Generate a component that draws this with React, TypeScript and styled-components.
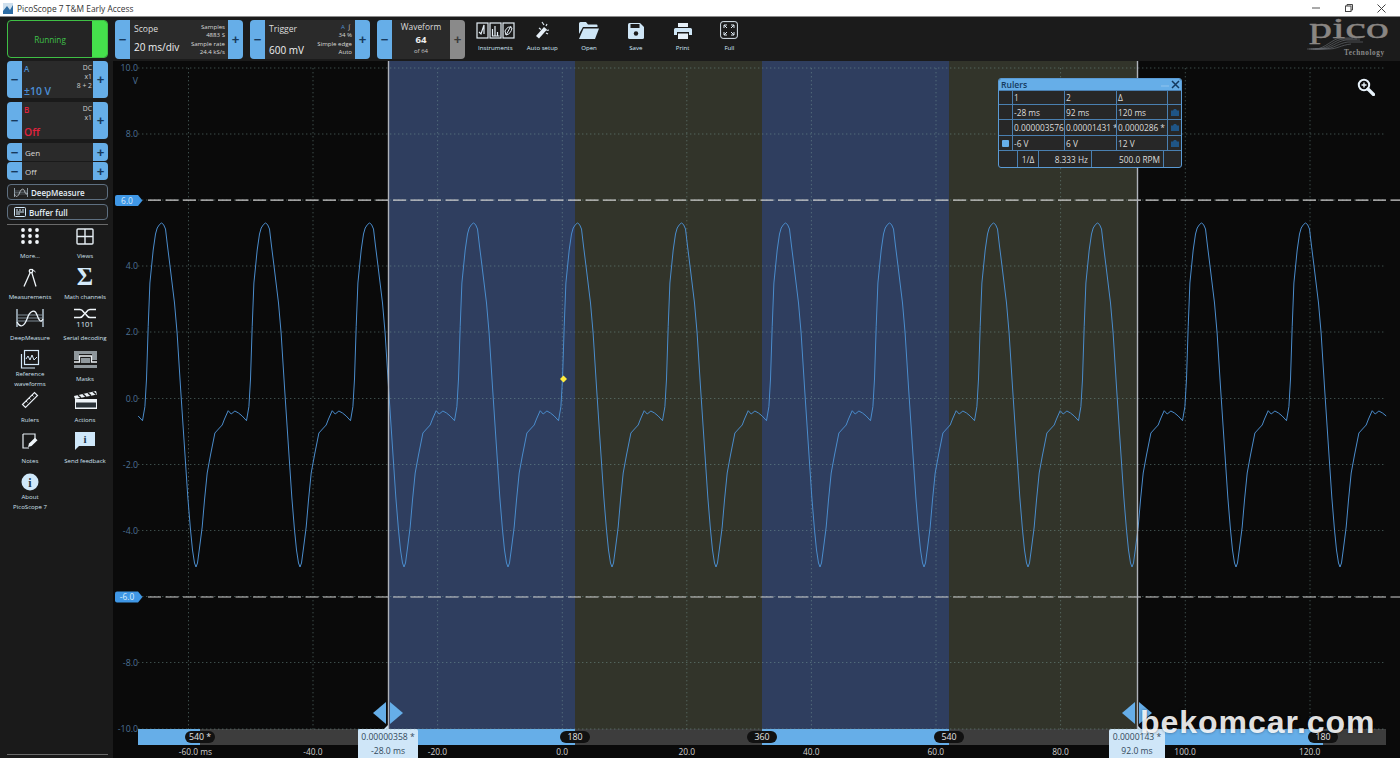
import React from "react";
import styled, { createGlobalStyle } from "styled-components";

const GlobalStyle = createGlobalStyle`
  html, body { margin: 0; padding: 0; background: #1a1a1a; }
  body { font-family: "Open Sans", "Liberation Sans", sans-serif; overflow: hidden; }
`;

const BLUE = "#66aee8";
const ICON = "#d4eafa";

const Shell = styled.div`
  width: 1400px;
  height: 758px;
  display: flex;
  flex-direction: column;
  overflow: hidden;
  background: #1a1a1a;
`;

/* title bar */
const TitleBar = styled.div`
  height: 16px;
  flex: none;
  background: #fff;
  border-bottom: 1px solid #8c8c8c;
  display: flex;
  align-items: center;
  padding-left: 3px;
  font-size: 8.4px;
  color: #333;
`;
const TitleText = styled.span`
  margin-left: 4px;
`;
const WinButtons = styled.div`
  margin-left: auto;
  display: flex;
  padding-right: 2px;
`;
const WinButton = styled.div`
  width: 33px;
  height: 16px;
  display: flex;
  align-items: center;
  justify-content: center;
`;

/* top toolbar */
const Toolbar = styled.div`
  height: 44px;
  flex: none;
  display: flex;
  align-items: center;
  padding-left: 7px;
  gap: 7px;
  background: #1b1b1b;
`;
const RunPanel = styled.div`
  width: 101px;
  height: 38px;
  box-sizing: border-box;
  border: 1px solid #3fbf45;
  border-radius: 4px;
  background: #242424;
  display: flex;
  overflow: hidden;
`;
const RunLabel = styled.div`
  flex: 1;
  display: flex;
  align-items: center;
  justify-content: center;
  color: #3fc04a;
  font-size: 8.2px;
  font-weight: 500;
`;
const RunLamp = styled.div`
  width: 15px;
  background: #45e04c;
`;
const Stepper = styled.div<{ $w: number; $h?: number }>`
  width: ${(p) => p.$w}px;
  height: ${(p) => p.$h ?? 39}px;
  display: flex;
  flex: none;
  border-radius: 4px;
  overflow: hidden;
  background: #2a2a2a;
`;
const StepBtn = styled.div<{ $off?: boolean }>`
  width: 15px;
  flex: none;
  background: ${(p) => (p.$off ? "#8a8a8a" : BLUE)};
  color: ${(p) => (p.$off ? "#3a3a3a" : "#16395c")};
  display: flex;
  align-items: center;
  justify-content: center;
  font-family: "Liberation Sans", sans-serif;
  font-size: 13px;
  font-weight: 700;
  line-height: 1;
`;
const StepBody = styled.div`
  flex: 1;
  min-width: 0;
  display: flex;
  justify-content: space-between;
  padding: 3px 3px 2px 4px;
  color: #e8e8e8;
`;
const StepMain = styled.div`
  display: flex;
  flex-direction: column;
  justify-content: space-between;
  white-space: nowrap;
`;
const StepTitle = styled.div`
  font-size: 8.6px;
  line-height: 12px;
  color: #dcdcdc;
`;
const StepValue = styled.div<{ $low?: boolean }>`
  font-size: 10px;
  font-weight: 500;
  line-height: 14px;
  padding-bottom: ${(p) => (p.$low ? "0" : "3px")};
  color: #f0f0f0;
`;
const StepInfo = styled.div`
  display: flex;
  flex-direction: column;
  justify-content: center;
  text-align: right;
  font-size: 6.1px;
  line-height: 8.4px;
  color: #d8d8d8;
  white-space: nowrap;
`;
const InfoChannel = styled.span`
  color: #4f8fd0;
`;
const StepCenter = styled.div`
  flex: 1;
  display: flex;
  flex-direction: column;
  align-items: center;
  justify-content: center;
  color: #dcdcdc;
  font-size: 8.4px;
  line-height: 12px;
`;
const CenterBig = styled.div`
  font-size: 9.6px;
  font-weight: 700;
  line-height: 13px;
  color: #eee;
`;
const CenterSmall = styled.div`
  font-size: 6px;
  line-height: 11px;
  color: #c8c8c8;
`;
const Tools = styled.div`
  display: flex;
`;
const TopTool = styled.div`
  width: 46.8px;
  height: 44px;
  display: flex;
  flex-direction: column;
  align-items: center;
  justify-content: flex-end;
  padding-bottom: 9px;
  box-sizing: border-box;
  gap: 5px;
  color: ${ICON};
  font-size: 6.1px;
  line-height: 8px;
  white-space: nowrap;
`;
const Logo = styled.div`
  margin-left: auto;
  padding-right: 5px;
  display: flex;
`;
const LogoSvg = styled.svg`
  overflow: visible;
`;

/* body */
const Body = styled.div`
  flex: 1;
  min-height: 0;
  display: flex;
`;
const Sidebar = styled.div`
  width: 113px;
  flex: none;
  box-sizing: border-box;
  padding-left: 7px;
  padding-right: 5px;
  display: flex;
  flex-direction: column;
  background: #1a1a1a;
`;
const Channel = styled.div`
  margin-bottom: 4px;
`;
const ChannelBody = styled.div`
  flex: 1;
  min-width: 0;
  display: flex;
  justify-content: space-between;
  padding: 2px 1px 0 2px;
`;
const ChannelMain = styled.div<{ $color: string }>`
  display: flex;
  flex-direction: column;
  justify-content: space-between;
  color: ${(p) => p.$color};
  font-weight: 600;
`;
const ChannelName = styled.div`
  font-size: 8px;
  line-height: 11px;
`;
const ChannelRange = styled.div`
  font-size: 10.4px;
  line-height: 14px;
`;
const ChannelInfo = styled.div`
  text-align: right;
  font-size: 6.8px;
  line-height: 9px;
  color: #d0d0d0;
`;
const GenRows = styled.div`
  display: flex;
  flex-direction: column;
  gap: 1px;
  margin-bottom: 4px;
`;
const GenText = styled.div`
  flex: 1;
  display: flex;
  align-items: center;
  padding-left: 3px;
  font-size: 8px;
  color: #d8d8d8;
`;
const WideBtn = styled.div`
  height: 16px;
  box-sizing: border-box;
  margin-bottom: 4px;
  border: 1px solid #5e6f80;
  border-radius: 4px;
  background: #222;
  display: flex;
  align-items: center;
  padding-left: 6px;
  gap: 3px;
  color: #e4eef6;
  font-size: 8px;
  font-weight: 600;
`;
const Divider = styled.div`
  height: 1px;
  background: #6a6a6a;
`;
const ToolGrid = styled.div`
  display: grid;
  grid-template-columns: 54px 56px;
  grid-auto-rows: 41px;
  margin: 0 0 0 -4px;
`;
const SideTool = styled.div`
  display: flex;
  flex-direction: column;
  align-items: center;
`;
const SideIcon = styled.div`
  height: 22px;
  display: flex;
  align-items: center;
  justify-content: center;
  color: ${ICON};
`;
const SideLabel = styled.div`
  height: 17px;
  display: flex;
  align-items: center;
  text-align: center;
  color: #cfe0ee;
  font-size: 6.1px;
  line-height: 9.5px;
  white-space: pre;
`;
const Sigma = styled.span`
  font-family: "Liberation Serif", serif;
  font-weight: 700;
  font-size: 25px;
  line-height: 22px;
  color: ${ICON};
`;
const SideFoot = styled.div`
  margin-top: auto;
  margin-bottom: 3px;
  height: 1px;
  background: #6a6a6a;
`;

/* plot */
const Plot = styled.div`
  flex: 1;
  display: flex;
  flex-direction: column;
  background: #0a0a0a;
  position: relative;
`;
const Chart = styled.div`
  height: 668px;
  flex: none;
  position: relative;
  z-index: 1;
`;
const ChartSvg = styled.svg`
  display: block;
  overflow: visible;
`;
const RulerWindow = styled.div`
  position: absolute;
  left: 885px;
  top: 17px;
  width: 184px;
  box-sizing: border-box;
  border: 1px solid #5a9ad4;
  border-radius: 3px;
  background: #272727;
  overflow: hidden;
  color: #dcdcdc;
  font-size: 8.3px;
`;
const WinHead = styled.div`
  height: 11px;
  background: ${BLUE};
  display: flex;
  align-items: center;
  padding: 0 1px 0 2px;
  color: #143a60;
  font-size: 8.6px;
  font-weight: 600;
`;
const WinHeadIcons = styled.div`
  margin-left: auto;
  display: flex;
  align-items: center;
  gap: 2px;
`;
const Row = styled.div<{ $h: number }>`
  display: grid;
  grid-template-columns: 14px 52px 52px 51px 1fr;
  height: ${(p) => p.$h}px;
  border-top: 1px solid #4a7fb0;
  box-sizing: border-box;
`;
const Cell = styled.div`
  border-right: 1px solid #4a7fb0;
  padding-left: 1px;
  display: flex;
  align-items: center;
  overflow: hidden;
  white-space: nowrap;
  &:last-child { border-right: 0; padding-left: 0; justify-content: center; }
`;
const Square = styled.div`
  width: 7px;
  height: 7px;
  margin-left: 2px;
  background: ${BLUE};
  border-radius: 1px;
`;
const FootRow = styled.div`
  display: grid;
  grid-template-columns: 21px 53px 73px;
  height: 17px;
  box-sizing: border-box;
  border-top: 1px solid #4a7fb0;
  padding-left: 18px;
`;
const FootCell = styled.div<{ $right?: boolean }>`
  border-left: 1px solid #4a7fb0;
  border-right: ${(p) => (p.$right ? "1px solid #4a7fb0" : "0")};
  display: flex;
  align-items: center;
  justify-content: ${(p) => (p.$right ? "flex-end" : "center")};
  padding-right: ${(p) => (p.$right ? "3px" : "0")};
  white-space: nowrap;
  &:nth-child(2) { justify-content: flex-end; padding-right: 3px; }
`;
const ZoomGlass = styled.div`
  position: absolute;
  left: 1244px;
  top: 17px;
`;

/* time axis */
const Axis = styled.div`
  flex: 1;
  position: relative;
`;
const Track = styled.div`
  display: flex;
  position: relative;
  height: 16px;
  width: 1248px;
  margin-left: 25px;
`;
const Segment = styled.div<{ $w: number; $on: boolean }>`
  width: ${(p) => p.$w}px;
  background: ${(p) => (p.$on ? BLUE : "#3d3d3d")};
`;
const Pill = styled.div<{ $x: number }>`
  position: absolute;
  left: ${(p) => p.$x - 138}px;
  top: 2px;
  transform: translateX(-50%);
  width: 30px;
  height: 12px;
  border-radius: 6px;
  background: #111;
  color: #e4e4e4;
  font-size: 8.8px;
  line-height: 12px;
  text-align: center;
`;
const Ticks = styled.div`
  display: flex;
  padding-left: 13px;
  color: #d0d0d0;
  font-size: 8.4px;
  line-height: 13px;
`;
const Tick = styled.div<{ $unit?: boolean }>`
  width: 124.6px;
  flex: none;
  text-align: center;
  padding-left: ${(p) => (p.$unit ? "14px" : "0")};
  box-sizing: border-box;
`;
const Callout = styled.div<{ $x: number; $w: number }>`
  position: absolute;
  left: ${(p) => p.$x - 113}px;
  top: 0;
  width: ${(p) => p.$w}px;
  height: 29px;
  background: #cfe6f8;
  border-radius: 2px 2px 0 0;
  color: #33495a;
  font-size: 8.6px;
  display: flex;
  flex-direction: column;
  align-items: center;
  justify-content: space-between;
  padding: 2px 0 1px;
  box-sizing: border-box;
  white-space: nowrap;
  &::before {
    content: "";
    position: absolute;
    top: -4px;
    left: 50%;
    margin-left: -4px;
    border-left: 4px solid transparent;
    border-right: 4px solid transparent;
    border-bottom: 4px solid #cfe6f8;
  }
`;
const Watermark = styled.div`
  position: absolute;
  left: 1027px;
  top: -24px;
  z-index: 3;
  color: rgba(255, 255, 255, 0.9);
  font-family: "Liberation Sans", sans-serif;
  font-size: 32px;
  font-weight: 700;
  line-height: 34px;
  letter-spacing: 0.95px;
  text-shadow: 0 0 3px rgba(0, 0, 0, 0.45);
  white-space: nowrap;
`;

/* icons */
const MoreIcon = () => (
  <svg width="18" height="16" viewBox="0 0 18 16" fill="#f2f6fa">
    {[2, 9, 16].flatMap((x) =>
      [2, 8, 14].map((y) => <circle key={x + "-" + y} cx={x} cy={y} r="1.9" />)
    )}
  </svg>
);
const ViewsIcon = () => (
  <svg width="18" height="17" viewBox="0 0 18 17" fill="none" stroke="#e6eef4" strokeWidth="1.4">
    <rect x="1" y="1" width="16" height="15" rx="1" />
    <path d="M9 1V16M1 8.5H17" />
  </svg>
);
const CompassIcon = () => (
  <svg width="14" height="19" viewBox="0 0 14 19" fill="none" stroke="#eef4f8" strokeWidth="1.3">
    <circle cx="8" cy="3" r="1.7" />
    <path d="M7.2 4.6L1 18.5M8.8 4.6L13 18.5" />
    <path d="M9 1L12.5 4" strokeWidth="1" />
  </svg>
);
const DeepIcon = ({ w = 28, h = 20 }: { w?: number; h?: number }) => (
  <svg width={w} height={h} viewBox="0 0 28 20" fill="none">
    <path d="M2 7H26M2 10H26M2 13H26" stroke="#7d8a94" strokeWidth="1" />
    <path d="M1 1V19M27 1V19" stroke={ICON} strokeWidth="1.2" />
    <path d="M1 14C4 20 8 19 11 11C14 2 19 1 21 7C23 13 25 15 27 11" stroke="#eef6fc" strokeWidth="1.3" />
  </svg>
);
const SerialIcon = () => (
  <svg width="22" height="20" viewBox="0 0 22 20" fill="none">
    <path d="M0 1.5H6C9 1.5 10 5.5 11 5.5C12 5.5 13 1.5 16 1.5H22M0 9.5H6C9 9.5 10 5.5 11 5.5C12 5.5 13 9.5 16 9.5H22" stroke="#f0f6fa" strokeWidth="1.5" />
    <text x="11" y="19" textAnchor="middle" fontSize="7.6" fill="#dfe9f2" fontFamily="Open Sans, sans-serif">1101</text>
  </svg>
);
const ReferenceIcon = () => (
  <svg width="20" height="20" viewBox="0 0 20 20" fill="none" stroke={ICON} strokeWidth="1.2">
    <path d="M1.5 5V19H15" />
    <rect x="4.5" y="1.5" width="14" height="14" />
    <path d="M6 10L8 7L10 11L12 6L14 11L17 8" strokeWidth="1" />
  </svg>
);
const MasksIcon = () => (
  <svg width="23" height="17" viewBox="0 0 23 17">
    <path d="M0 0H23V9H18V3H5V9H0Z" fill="#8f979c" />
    <path d="M0 14H23V17H0ZM7 7H16V12H7Z" fill="#8f979c" />
    <path d="M0 11H5.5V5H17.5V11H23" stroke="#eef2f5" strokeWidth="1.3" fill="none" />
  </svg>
);
const RulerIcon = () => (
  <svg width="18" height="18" viewBox="0 0 18 18" fill="none" stroke="#e8eef4" strokeWidth="1.2">
    <path d="M1.5 13.5L13.5 1.5L16.5 4.5L4.5 16.5Z" />
    <path d="M5 10L6.5 11.5M8 7L9.5 8.5M11 4L12.5 5.5" strokeWidth="0.9" />
  </svg>
);
const ClapIcon = () => (
  <svg width="23" height="18" viewBox="0 0 23 18">
    <path d="M0 5L22 0L23 3.5L1 8Z" fill="#eef4f8" />
    <path d="M4 4.2L7 6.8M9 3L12 5.8M14 2L17 4.6M19 .8L22 3.4" stroke="#222" strokeWidth="1.4" />
    <rect x="1" y="8" width="22" height="10" fill="#eef4f8" />
    <rect x="2" y="11.5" width="20" height="5" fill="#2a3238" />
  </svg>
);
const NoteIcon = () => (
  <svg width="16" height="16" viewBox="0 0 16 16" fill="none">
    <path d="M1 1H13V7M7 15H1V1" stroke="#e6eef4" strokeWidth="1.2" />
    <path d="M6 14L7 10.5L13 4.8L15.5 7.2L9.5 13Z" fill="#f0f6fa" />
  </svg>
);
const FeedbackIcon = () => (
  <svg width="20" height="18" viewBox="0 0 20 18">
    <path d="M0 0H20V14H4L0 18Z" fill="#cfe8fa" />
    <text x="10" y="11" textAnchor="middle" fontSize="11" fontWeight="700" fill="#20384c" fontFamily="Liberation Serif, serif">i</text>
  </svg>
);
const AboutIcon = () => (
  <svg width="18" height="18" viewBox="0 0 18 18">
    <circle cx="9" cy="9" r="8.5" fill="#cfe8fa" />
    <text x="9" y="13.5" textAnchor="middle" fontSize="12" fontWeight="700" fill="#20384c" fontFamily="Liberation Serif, serif">i</text>
  </svg>
);
const BufferIcon = () => (
  <svg width="12" height="10" viewBox="0 0 12 10" fill="none" stroke={ICON} strokeWidth="1">
    <rect x="0.5" y="0.5" width="11" height="9" rx="1" />
    <path d="M2 3H4M5 3H7M8 3H10M2 5H10M2 7H6" />
  </svg>
);
const InstrumentsIcon = () => (
  <svg width="39" height="17" viewBox="0 0 39 17" fill="none" stroke="#e4eef6" strokeWidth="1.2">
    <rect x="1" y="1" width="11" height="15" />
    <rect x="14" y="1" width="11" height="15" />
    <rect x="27" y="1" width="11" height="15" />
    <path d="M3 10L5 12L8 3V12" />
    <path d="M16.5 14V7M19 14V4M21.5 14V10M23.5 14H16" />
    <path d="M30 13L35 4M29 9Q32 3 36 6Q35 12 30 13Z" strokeWidth="1" />
  </svg>
);
const AutoIcon = () => (
  <svg width="17" height="18" viewBox="0 0 17 18">
    <path d="M2 15L10 6L13 8.5L5 17.5Z" fill="#e6f0f8" />
    <path d="M8 1L10 4M13 3L12 5M15 9L12.5 9.5M5 7L7 8.5M14 13L12 12" stroke="#dfe9f2" strokeWidth="1.2" />
  </svg>
);
const OpenIcon = () => (
  <svg width="20" height="17" viewBox="0 0 20 17" fill="#cfe6f6">
    <path d="M0 1.5Q0 0 1.5 0H7L9 2.5H17.5Q18.5 2.5 18.5 3.5V5H4L0 12Z" />
    <path d="M4.5 6.5H20L16 17H0Z" />
  </svg>
);
const SaveIcon = () => (
  <svg width="16" height="16" viewBox="0 0 16 16">
    <path d="M0 1.5Q0 0 1.5 0H12L16 4V14.5Q16 16 14.5 16H1.5Q0 16 0 14.5Z" fill="#cfe6f6" />
    <rect x="2.5" y="1" width="9" height="4" fill="#1b1b1b" />
    <circle cx="8" cy="10.5" r="2.2" fill="#1b1b1b" />
  </svg>
);
const PrintIcon = () => (
  <svg width="18" height="16" viewBox="0 0 18 16">
    <rect x="4" y="0" width="10" height="4" fill="#e6f0f8" />
    <path d="M1.5 5H16.5Q18 5 18 6.5V12H15V9H3V12H0V6.5Q0 5 1.5 5Z" fill="#cfe6f6" />
    <rect x="4" y="10.5" width="10" height="5.5" fill="#e6f0f8" />
  </svg>
);
const FullIcon = () => (
  <svg width="18" height="18" viewBox="0 0 18 18" fill="none" stroke="#dfeaf3" strokeWidth="1">
    <rect x="0.6" y="0.6" width="16.8" height="16.8" rx="2.5" />
    <path d="M4 7V4H7M4 4L7 7M14 7V4H11M14 4L11 7M4 11V14H7M4 14L7 11M14 11V14H11M14 14L11 11" />
  </svg>
);
const CamIcon = () => (
  <svg width="8" height="7" viewBox="0 0 8 7" fill="#1f5586">
    <path d="M0 1.5H2L3 0H5L6 1.5H8V7H0Z" />
  </svg>
);

const PicoLogo = () => (
  <LogoSvg width="92" height="42" viewBox="0 0 92 42">
    <g fill="none" stroke="#6f7478" strokeWidth="0.6">
      <path d="M4 31H12C22 31 30 20 38 20H50" />
      <path d="M6 31H15C25 31 32 21 41 21H54" />
      <path d="M8 31H18C27 31 34 23 43 22H57" />
      <path d="M10 31H21C30 31 36 25 45 24H60" />
      <path d="M12 31H26C34 31 38 27 48 26" />
    </g>
    <text x="6" y="20" fontFamily="Liberation Serif, serif" fontSize="30" fill="#8a8683" stroke="#8a8683" strokeWidth="0.4" textLength="80" lengthAdjust="spacingAndGlyphs">pico</text>
    <text x="41" y="37" fontFamily="Liberation Serif, serif" fontSize="7.2" fontWeight="700" fill="#8a8a8a" textLength="40">Technology</text>
  </LogoSvg>
);

/* data */
const sideTools: { label: string; icon: React.ReactNode }[] = [
  { label: "More...", icon: <MoreIcon /> },
  { label: "Views", icon: <ViewsIcon /> },
  { label: "Measurements", icon: <CompassIcon /> },
  { label: "Math channels", icon: <Sigma>Σ</Sigma> },
  { label: "DeepMeasure", icon: <DeepIcon /> },
  { label: "Serial decoding", icon: <SerialIcon /> },
  { label: "Reference\nwaveforms", icon: <ReferenceIcon /> },
  { label: "Masks", icon: <MasksIcon /> },
  { label: "Rulers", icon: <RulerIcon /> },
  { label: "Actions", icon: <ClapIcon /> },
  { label: "Notes", icon: <NoteIcon /> },
  { label: "Send feedback", icon: <FeedbackIcon /> },
  { label: "About\nPicoScope 7", icon: <AboutIcon /> },
];

const topTools: { label: string; icon: React.ReactNode }[] = [
  { label: "Instruments", icon: <InstrumentsIcon /> },
  { label: "Auto setup", icon: <AutoIcon /> },
  { label: "Open", icon: <OpenIcon /> },
  { label: "Save", icon: <SaveIcon /> },
  { label: "Print", icon: <PrintIcon /> },
  { label: "Full", icon: <FullIcon /> },
];

// one cycle of the trace, dx from the peak -> y
const cycle: [number, number][] = [
  [0, 223], [2, 224.5], [4, 229], [6, 246], [8.5, 266], [13, 303], [15.6, 333], [19, 387], [22.3, 437], [26.3, 497],
  [29, 530], [31, 550], [33, 563], [34.5, 567], [36, 563], [38, 548], [40.7, 527], [43, 500], [45.7, 473], [49, 455],
  [53.4, 433], [57, 429], [60.7, 425], [63, 419], [66.7, 410.7], [69.7, 414], [73.4, 411], [77, 413], [80.7, 416],
  [85, 420.7], [87.4, 406.7], [89, 379], [90.7, 326.7], [92.4, 283], [95.7, 250], [98, 234], [99.7, 228], [102, 224.5],
];

const tracePoints = () => {
  const pts: string[] = [];
  for (let k = -1; k <= 11; k++) {
    const peak = 161.5 + 104 * k;
    for (const [dx, y] of cycle) {
      const x = peak + dx;
      if (x >= 138 && x <= 1386.5) pts.push(x.toFixed(1) + "," + y);
    }
  }
  return pts.join(" ");
};

const gridX = [188.5, 313, 437.6, 562.3, 686.8, 811.4, 936, 1060.6, 1185.3, 1310];
const yLabels: [string, number][] = [
  ["10.0", 68], ["8.0", 134], ["4.0", 266], ["2.0", 332], ["0.0", 398.5],
  ["-2.0", 464.5], ["-4.0", 530.5], ["-8.0", 662.5], ["-10.0", 729],
];
const gridY = [68, 134, 200, 266, 332, 398.5, 464.5, 530.5, 596.5, 662.5, 729];
const bands: [number, number, string][] = [
  [388, 187, "#2f3e5f"], [575, 187, "#32342a"], [762, 187, "#2f3e5f"], [949, 188, "#32342a"],
];
const segments: [number, boolean][] = [
  [62, true], [158, false], [217, true], [187, false], [187, true], [188, false], [186, true], [63, false],
];
const pills: [string, number][] = [["540 *", 200], ["180", 575], ["360", 762], ["540", 949], ["180", 1323]];
const ticks = ["-60.0 ms", "-40.0", "-20.0", "0.0", "20.0", "40.0", "60.0", "80.0", "100.0", "120.0"];

const rulerRows: { h: number; cells: string[]; mark?: boolean; cam?: boolean }[] = [
  { h: 14, cells: ["1", "2", "Δ"] },
  { h: 15, cells: ["-28 ms", "92 ms", "120 ms"], cam: true },
  { h: 16, cells: ["0.000003576", "0.00001431 *", "0.0000286 *"], cam: true },
  { h: 15, cells: ["-6 V", "6 V", "12 V"], mark: true, cam: true },
];

const Pin = ({ y, label }: { y: number; label: string }) => (
  <g>
    <path d={`M117 ${y - 5.5}H138L142.5 ${y}L138 ${y + 5.5}H117Q115 ${y + 5.5} 115 ${y + 3.5}V${y - 3.5}Q115 ${y - 5.5} 117 ${y - 5.5}Z`} fill="#3f97e6" />
    <text x="127" y={y + 3} textAnchor="middle" fontSize="8.4" fill="#d8ecfb">{label}</text>
  </g>
);

const Handles = ({ x }: { x: number }) => (
  <g fill={BLUE}>
    <path d={`M${x - 2} 702L${x - 15} 713L${x - 2} 724Z`} />
    <path d={`M${x + 2} 702L${x + 15} 713L${x + 2} 724Z`} />
  </g>
);

const TopStepper = ({ w, children, off }: { w: number; children: React.ReactNode; off?: boolean }) => (
  <Stepper $w={w}>
    <StepBtn>−</StepBtn>
    {children}
    <StepBtn $off={off}>+</StepBtn>
  </Stepper>
);

export default function App() {
  return (
    <Shell>
      <GlobalStyle />
      <TitleBar>
        <svg width="10" height="11" viewBox="0 0 10 11">
          <rect width="10" height="11" fill="#cfe0ee" />
          <path d="M0 8L4 3L7 7L10 2V11H0Z" fill="#2f6ea5" />
        </svg>
        <TitleText>PicoScope 7 T&amp;M Early Access</TitleText>
        <WinButtons>
          <WinButton>
            <svg width="8" height="8" viewBox="0 0 8 8"><path d="M0 4H8" stroke="#555" /></svg>
          </WinButton>
          <WinButton>
            <svg width="8" height="8" viewBox="0 0 8 8" fill="none" stroke="#444"><rect x=".5" y="2" width="5.5" height="5.5" /><path d="M2 2V.5H7.5V6H6" /></svg>
          </WinButton>
          <WinButton>
            <svg width="9" height="9" viewBox="0 0 9 9"><path d="M.5 .5L8.5 8.5M8.5 .5L.5 8.5" stroke="#444" /></svg>
          </WinButton>
        </WinButtons>
      </TitleBar>

      <Toolbar>
        <RunPanel>
          <RunLabel>Running</RunLabel>
          <RunLamp />
        </RunPanel>
        <TopStepper w={128}>
          <StepBody>
            <StepMain>
              <StepTitle>Scope</StepTitle>
              <StepValue>20 ms/div</StepValue>
            </StepMain>
            <StepInfo>
              <div>Samples</div>
              <div>4883 S</div>
              <div>Sample rate</div>
              <div>24.4 kS/s</div>
            </StepInfo>
          </StepBody>
        </TopStepper>
        <TopStepper w={120}>
          <StepBody>
            <StepMain>
              <StepTitle>Trigger</StepTitle>
              <StepValue $low>600 mV</StepValue>
            </StepMain>
            <StepInfo>
              <div><InfoChannel>A</InfoChannel> &nbsp;∫&nbsp;</div>
              <div>34 %</div>
              <div>Simple edge</div>
              <div>Auto</div>
            </StepInfo>
          </StepBody>
        </TopStepper>
        <TopStepper w={88} off>
          <StepCenter>
            <div>Waveform</div>
            <CenterBig>64</CenterBig>
            <CenterSmall>of 64</CenterSmall>
          </StepCenter>
        </TopStepper>
        <Tools>
          {topTools.map((t) => (
            <TopTool key={t.label}>
              {t.icon}
              <span>{t.label}</span>
            </TopTool>
          ))}
        </Tools>
        <Logo>
          <PicoLogo />
        </Logo>
      </Toolbar>

      <Body>
        <Sidebar>
          <Channel>
            <Stepper $w={101} $h={37}>
              <StepBtn>−</StepBtn>
              <ChannelBody>
                <ChannelMain $color="#4a8fd6">
                  <ChannelName>A</ChannelName>
                  <ChannelRange>±10 V</ChannelRange>
                </ChannelMain>
                <ChannelInfo>
                  <div>DC</div>
                  <div>x1</div>
                  <div>8 + 2</div>
                </ChannelInfo>
              </ChannelBody>
              <StepBtn>+</StepBtn>
            </Stepper>
          </Channel>
          <Channel>
            <Stepper $w={101} $h={37}>
              <StepBtn>−</StepBtn>
              <ChannelBody>
                <ChannelMain $color="#e0233f">
                  <ChannelName>B</ChannelName>
                  <ChannelRange>Off</ChannelRange>
                </ChannelMain>
                <ChannelInfo>
                  <div>DC</div>
                  <div>x1</div>
                </ChannelInfo>
              </ChannelBody>
              <StepBtn>+</StepBtn>
            </Stepper>
          </Channel>
          <GenRows>
            {["Gen", "Off"].map((g) => (
              <Stepper key={g} $w={101} $h={18}>
                <StepBtn>−</StepBtn>
                <GenText>{g}</GenText>
                <StepBtn>+</StepBtn>
              </Stepper>
            ))}
          </GenRows>
          <WideBtn>
            <DeepIcon w={14} h={11} />
            DeepMeasure
          </WideBtn>
          <WideBtn>
            <BufferIcon />
            Buffer full
          </WideBtn>
          <Divider />
          <ToolGrid>
            {sideTools.map((t) => (
              <SideTool key={t.label}>
                <SideIcon>{t.icon}</SideIcon>
                <SideLabel>{t.label}</SideLabel>
              </SideTool>
            ))}
          </ToolGrid>
          <SideFoot />
        </Sidebar>

        <Plot>
          <Chart>
            <ChartSvg width="1287" height="668" viewBox="113 61 1287 668" fontFamily="Open Sans, sans-serif">
              {bands.map(([x, w, c]) => (
                <rect key={x} x={x} y={61} width={w} height={668} fill={c} />
              ))}
              <g stroke="rgba(125,160,155,0.45)" strokeWidth="1" strokeDasharray="1.4 2.6" fill="none">
                {gridY.map((y) => (
                  <path key={y} d={`M138 ${y}H1386`} />
                ))}
                {gridX.map((x) => (
                  <path key={x} d={`M${x} 68V729`} />
                ))}
              </g>
              <g fill="#4d7195" fontSize="8.8" textAnchor="end">
                {yLabels.map(([t, y]) => (
                  <text key={t} x={138} y={y + 3}>{t}</text>
                ))}
                <text x={138} y={84}>V</text>
              </g>
              <polyline points={tracePoints()} fill="none" stroke="#4a8ccc" strokeWidth="1" strokeLinejoin="round" />
              <path d="M148 200.2H1400M148 597H1400" stroke="#cfcfcf" strokeWidth="1.2" strokeDasharray="13 4.5" />
              <path d="M388.5 61V729M1137.5 61V729" stroke="#aeb2ba" strokeWidth="1.4" />
              <Pin y={200.5} label="6.0" />
              <Pin y={597} label="-6.0" />
              <Handles x={388} />
              <Handles x={1137} />
              <path d="M563.5 375.5L567 379L563.5 382.5L560 379Z" fill="#ffec3d" />
            </ChartSvg>
            <RulerWindow>
              <WinHead>
                Rulers
                <WinHeadIcons>
                  <svg width="8" height="8" viewBox="0 0 8 8"><path d="M0 5H8" stroke="#8fc4ee" strokeWidth="1.2" /></svg>
                  <svg width="9" height="9" viewBox="0 0 9 9"><path d="M1 1L8 8M8 1L1 8" stroke="#143a60" strokeWidth="1.5" /></svg>
                </WinHeadIcons>
              </WinHead>
              {rulerRows.map((r) => (
                <Row key={r.cells[0]} $h={r.h}>
                  <Cell>{r.mark && <Square />}</Cell>
                  {r.cells.map((c) => (
                    <Cell key={c}>{c}</Cell>
                  ))}
                  <Cell>{r.cam && <CamIcon />}</Cell>
                </Row>
              ))}
              <FootRow>
                <FootCell>1/Δ</FootCell>
                <FootCell>8.333 Hz</FootCell>
                <FootCell $right>500.0 RPM</FootCell>
              </FootRow>
            </RulerWindow>
            <ZoomGlass>
              <svg width="18" height="18" viewBox="0 0 18 18" fill="none">
                <circle cx="7" cy="7" r="5.2" stroke="#e8f2fa" strokeWidth="2" />
                <path d="M11 11L16.5 16.5" stroke="#e8f2fa" strokeWidth="3.2" strokeLinecap="round" />
                <path d="M4.5 7H9.5M7 4.5V9.5" stroke="#e8f2fa" strokeWidth="1.4" />
              </svg>
            </ZoomGlass>
          </Chart>
          <Axis>
            <Track>
              {segments.map(([w, on], i) => (
                <Segment key={i} $w={w} $on={on} />
              ))}
              {pills.map(([t, x]) => (
                <Pill key={x} $x={x}>{t}</Pill>
              ))}
            </Track>
            <Ticks>
              {ticks.map((t) => (
                <Tick key={t} $unit={t.endsWith("ms")}>{t}</Tick>
              ))}
            </Ticks>
            <Callout $x={358} $w={60}>
              <span>0.00000358 *</span>
              <span>-28.0 ms</span>
            </Callout>
            <Callout $x={1109} $w={56}>
              <span>0.0000143 *</span>
              <span>92.0 ms</span>
            </Callout>
            <Watermark>bekomcar.com</Watermark>
          </Axis>
        </Plot>
      </Body>
    </Shell>
  );
}
